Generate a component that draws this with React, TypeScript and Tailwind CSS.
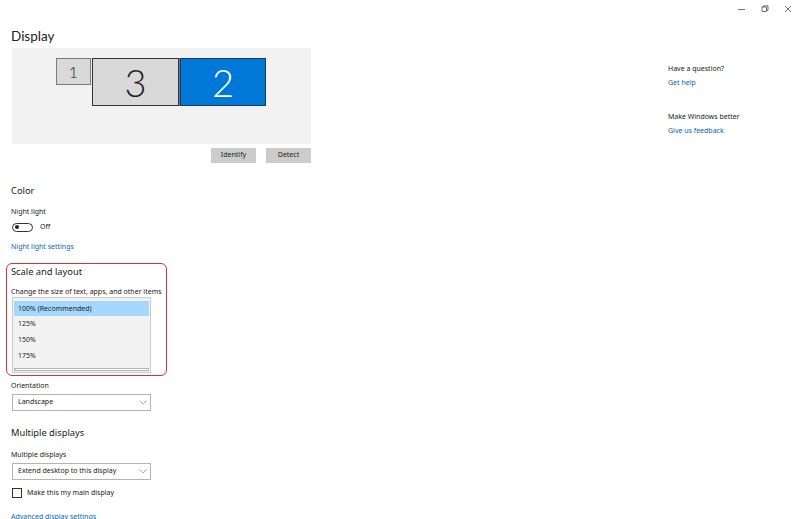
import React from "react";

const font = { fontFamily: '"Noto Sans", "Open Sans", sans-serif' };
const thin = { fontFamily: 'Lato, "Open Sans", sans-serif' };

function Chevron() {
  return (
    <svg width="8" height="5" viewBox="0 0 8 5" className="mr-[3px]">
      <path d="M0.5 0.5 L4 4 L7.5 0.5" fill="none" stroke="#a0a0a0" strokeWidth="0.8" />
    </svg>
  );
}

function Combo({ label }: { label: string }) {
  return (
    <div className="ml-[1px] flex h-[17px] w-[139px] items-center justify-between border border-[#b4b4b4] bg-white pl-[5px] text-[7px] text-[#222]">
      <span>{label}</span>
      <Chevron />
    </div>
  );
}

export default function App() {
  return (
    <div className="relative h-[519px] w-[800px] overflow-hidden bg-white text-[#1a1a1a]" style={font}>
      {/* title bar */}
      <div className="flex h-[17px] items-center justify-end gap-[15px] pr-[8px]">
        <svg width="8" height="8" viewBox="0 0 8 8">
          <path d="M0 4.5 H7" stroke="#333" strokeWidth="0.7" />
        </svg>
        <svg width="8" height="8" viewBox="0 0 8 8">
          <rect x="1" y="2" width="4.5" height="4.5" fill="none" stroke="#333" strokeWidth="0.7" />
          <path d="M2.5 2 V0.8 H7 V5.3 H5.5" fill="none" stroke="#333" strokeWidth="0.7" />
        </svg>
        <svg width="8" height="8" viewBox="0 0 8 8">
          <path d="M1 1 L7 7 M7 1 L1 7" stroke="#333" strokeWidth="0.7" />
        </svg>
      </div>

      <div className="flex">
        {/* left column */}
        <div className="flex w-[657px] flex-col pl-[11px]">
          <div className="mt-[9px] text-[13.5px] leading-[20px] text-[#222]" style={thin}>Display</div>

          <div className="relative mt-[2px] ml-[1px] h-[96px] w-[299px] bg-[#f2f2f2]">
            <div className="absolute left-[44px] top-[10px] flex h-[27px] w-[35px] items-center justify-center border border-[#7a7a7a] bg-[#d9d9d9] text-[16px] font-light leading-none text-[#222]" style={thin}>
              1
            </div>
            <div className="absolute left-[80px] top-[10px] flex h-[48px] w-[87px] items-center justify-center border border-[#333] bg-[#d9d9d9] text-[38px] font-light leading-none text-[#222]" style={thin}>
              3
            </div>
            <div className="absolute left-[167px] top-[10px] h-[48px] w-[2px] bg-[#7a7a7a]" />
            <div className="absolute left-[168px] top-[10px] flex h-[48px] w-[86px] items-center justify-center border border-[#1c3b5a] bg-[#0078d7] text-[38px] font-light leading-none text-white" style={thin}>
              2
            </div>
          </div>

          <div className="mt-[4px] flex w-[300px] justify-end gap-[10px]">
            <div className="flex h-[15px] w-[45px] items-center justify-center bg-[#cccccc] text-[7px] text-[#222]">Identify</div>
            <div className="flex h-[15px] w-[45px] items-center justify-center bg-[#cccccc] text-[7px] text-[#222]">Detect</div>
          </div>

          <div className="mt-[21px] text-[9.3px] leading-[14px]">Color</div>
          <div className="mt-[9px] text-[7px] leading-[10px]">Night light</div>
          <div className="mt-[5px] flex items-center gap-[7px]">
            <div className="ml-[1px] flex h-[9px] w-[21px] items-center rounded-full border border-[#333] pl-[2px]">
              <div className="h-[4px] w-[4px] rounded-full bg-[#222]" />
            </div>
            <span className="text-[7px] leading-[10px]">Off</span>
          </div>
          <div className="mt-[10px] text-[7px] leading-[10px] text-[#0067b8]">Night light settings</div>

          <div className="mt-[11px] -ml-[5px] flex h-[113px] w-[161px] flex-col rounded-[6px] border border-[#d13438] pl-[4px]">
            <div className="mt-[1px] text-[9.3px] leading-[14px]">Scale and layout</div>
            <div className="mt-[8px] text-[7px] leading-[10px] whitespace-nowrap">Change the size of text, apps, and other items</div>
            <div className="ml-[1px] flex h-[76px] w-[139px] flex-col border border-[#cccccc] bg-[#f2f2f2] px-[1px] pt-[3px] text-[7px] leading-[10px] text-[#222]">
              <div className="flex h-[15px] items-center bg-[#a6d8ff] pl-[4px]">100% (Recommended)</div>
              <div className="flex h-[16px] items-center pl-[4px]">125%</div>
              <div className="flex h-[16px] items-center pl-[4px]">150%</div>
              <div className="flex h-[16px] items-center pl-[4px]">175%</div>
              <div className="mt-auto mb-[1px] h-[3px] border border-[#b4b4b4] bg-white" />
            </div>
          </div>

          <div className="mt-[5px] text-[7px] leading-[10px]">Orientation</div>
          <div className="mt-[3px]">
            <Combo label="Landscape" />
          </div>

          <div className="mt-[15px] text-[9.3px] leading-[14px]">Multiple displays</div>
          <div className="mt-[10px] text-[7px] leading-[10px]">Multiple displays</div>
          <div className="mt-[3px]">
            <Combo label="Extend desktop to this display" />
          </div>
          <div className="mt-[8px] flex items-center gap-[5px]">
            <div className="ml-[1px] h-[10px] w-[10px] border border-[#333] bg-white" />
            <span className="text-[7px] leading-[10px]">Make this my main display</span>
          </div>
          <div className="mt-[14px] text-[7px] leading-[10px] text-[#0067b8]">Advanced display settings</div>
        </div>

        {/* right column */}
        <div className="flex flex-col pl-[11px] text-[7px] leading-[10px]">
          <div className="mt-[47px]">Have a question?</div>
          <div className="mt-[4px] text-[#0067b8]">Get help</div>
          <div className="mt-[24px]">Make Windows better</div>
          <div className="mt-[4px] text-[#0067b8]">Give us feedback</div>
        </div>
      </div>
    </div>
  );
}
